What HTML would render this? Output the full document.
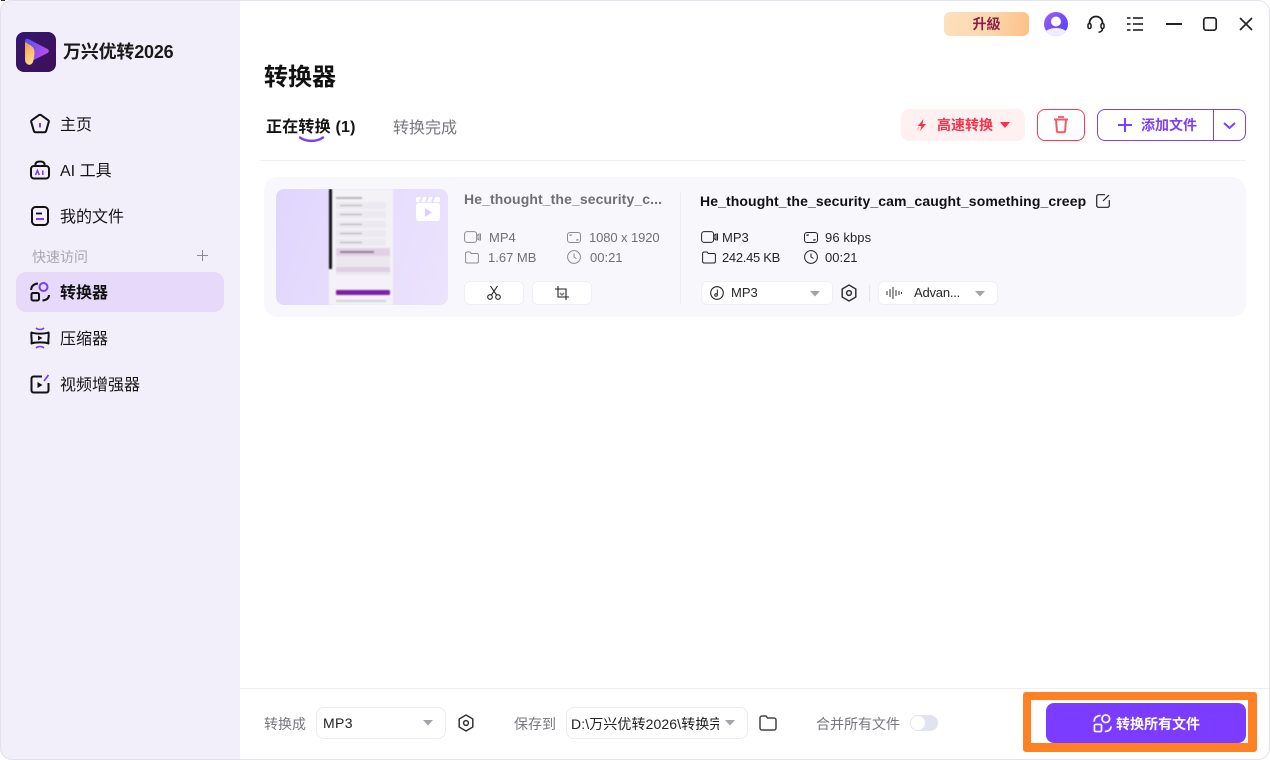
<!DOCTYPE html>
<html lang="zh-CN"><head><meta charset="utf-8"><title>万兴优转2026</title>
<style>
*{box-sizing:border-box}
html,body{margin:0;padding:0;width:1270px;height:760px;overflow:hidden;background:#fff}
body{position:relative;font-family:"Liberation Sans","Noto Sans CJK SC",sans-serif;color:#111}
.a{position:absolute;white-space:nowrap}
svg{position:absolute;overflow:visible;fill:none}
.win{position:absolute;left:0;top:0;width:1270px;height:760px;border:1px solid #e4e3ee;border-radius:12px;overflow:hidden;background:#fff}
.side{position:absolute;left:0;top:0;width:240px;height:760px;background:#f2effb}
.nav{font-size:16px;line-height:24px;color:#151515}
.meta{font-size:13px;line-height:18px;color:#6f6f76}
.meta2{font-size:13px;line-height:18px;color:#26262b}
.wbtn{position:absolute;background:#fff;border-radius:6px;border:1px solid #efeff5}
</style></head><body>
<div class="win"></div>
<div class="side" style="border-radius:12px 0 0 12px;border:1px solid #e2e0ee;border-right:0"></div>
<div class="a" style="left:1px;top:0;width:4px;height:1px;background:#333"></div>

<!-- logo -->
<svg style="left:16px;top:32px" width="40" height="40" viewBox="0 0 40 40">
<defs>
<linearGradient id="lg" x1="0" y1="0" x2="1" y2="1"><stop offset="0" stop-color="#35176f"/><stop offset="1" stop-color="#3d0f58"/></linearGradient>
<linearGradient id="lp" x1="0" y1="0" x2="1" y2=".6"><stop offset="0" stop-color="#4d52f7"/><stop offset="1" stop-color="#c04be8"/></linearGradient>
<linearGradient id="lo" x1="0" y1="0" x2=".5" y2="1"><stop offset="0" stop-color="#f09a4a"/><stop offset="1" stop-color="#ffd98a"/></linearGradient>
</defs>
<rect width="40" height="40" rx="8" fill="url(#lg)"/>
<path d="M9 9c0-2 1.700-2.800 3.400-2L31.500 17c1.800 1 1.800 3 0 4L16 29 9 14z" fill="url(#lp)"/>
<path d="M9 10l5 3c3 1.800 4.500 4 4.500 8l-1 7c-.5 4-3.500 5.500-5.500 4.500-2-1-3-2.500-3-5.500z" fill="url(#lo)"/>
</svg>
<div class="a" style="left:63px;top:39px;font-size:18px;line-height:26px;font-weight:700;letter-spacing:-.2px;color:#1a1a1a">万兴优转2026</div>

<!-- nav -->
<svg style="left:30px;top:114px" width="20" height="20" viewBox="0 0 20 20"><path d="M8.800 1.200a2 2 0 0 1 2.400 0l6.800 4.800a2 2 0 0 1 .7 2.200l-2.500 8.600a2 2 0 0 1-1.900 1.400H5.700a2 2 0 0 1-1.900-1.400L1.300 8.200A2 2 0 0 1 2 6z" stroke="#111" stroke-width="2"/><path d="M10 9v4.500" stroke="#7a3ff5" stroke-width="2"/></svg>
<div class="a nav" style="left:60px;top:114px">主页</div>

<svg style="left:30px;top:160px" width="20" height="20" viewBox="0 0 20 20"><rect x="1" y="6" width="18" height="12.500" rx="3" stroke="#111" stroke-width="2"/><path d="M5.500 6V4.500C5.500 2.500 7 1.500 10 1.500s4.500 1 4.500 3V6" stroke="#111" stroke-width="2"/><path d="M5.500 15l1.900-4.500L9.300 15M12.800 10.500V15" stroke="#7a3ff5" stroke-width="1.600"/></svg>
<div class="a nav" style="left:60px;top:160px">AI 工具</div>

<svg style="left:30px;top:206px" width="20" height="20" viewBox="0 0 20 20"><rect x="2" y="1" width="16" height="18" rx="3.500" stroke="#111" stroke-width="2"/><path d="M6 7.500h6" stroke="#111" stroke-width="1.800"/><path d="M6 13h8" stroke="#7a3ff5" stroke-width="2"/></svg>
<div class="a nav" style="left:60px;top:206px">我的文件</div>

<div class="a" style="left:32px;top:247px;font-size:14px;line-height:20px;color:#a8a6af">快速访问</div>
<svg style="left:197px;top:250px" width="11" height="11"><path d="M5.500 0v11M0 5.500h11" stroke="#8c8a94" stroke-width="1"/></svg>

<div class="a" style="left:16px;top:272px;width:208px;height:40px;background:#e6d9fa;border-radius:10px"></div>
<svg style="left:30px;top:282px" width="20" height="20" viewBox="0 0 20 20"><circle cx="13.500" cy="5" r="4" stroke="#7a3ff5" stroke-width="2"/><rect x="1.500" y="11" width="7.500" height="7.500" rx="1.500" stroke="#111" stroke-width="2"/><path d="M1.200 8C1.200 4 3.500 2 8 1.500M19 13c0 3-2 5-6.500 5.500" stroke="#111" stroke-width="2"/></svg>
<div class="a nav" style="left:60px;top:282px;font-weight:700;color:#111">转换器</div>

<svg style="left:30px;top:327px" width="20" height="22" viewBox="0 0 20 22"><path d="M1.500 5.500C5 7 15 7 18.500 5.500c.7 3.500-.7 7.500 0 11C15 15 5 15 1.500 16.500c.7-3.500-.7-7.500 0-11z" stroke="#111" stroke-width="2" stroke-linejoin="round"/><path d="M8 8.500l4.500 2.500L8 13.500z" fill="#111"/><path d="M6 1c2 2 6 2 8 0M6 21c2-2 6-2 8 0" stroke="#7a3ff5" stroke-width="1.600"/></svg>
<div class="a nav" style="left:60px;top:328px">压缩器</div>

<svg style="left:30px;top:374px" width="20" height="20" viewBox="0 0 20 20"><path d="M12 2.500H3.500a2 2 0 0 0-2 2v12a2 2 0 0 0 2 2h13a2 2 0 0 0 2-2V9" stroke="#111" stroke-width="2"/><path d="M7.500 8l5 3-5 3z" fill="#111"/><path d="M14 7l4.500-6" stroke="#7a3ff5" stroke-width="1.800"/></svg>
<div class="a nav" style="left:60px;top:374px">视频增强器</div>

<!-- top bar -->
<div class="a" style="left:944px;top:12px;width:85px;height:24px;border-radius:6px;background:linear-gradient(100deg,#fde0bd 0%,#fcd7ae 55%,#fdbf85 100%);text-align:center;font-size:14px;line-height:24px;font-weight:700;color:#8c1f47">升級</div>
<svg style="left:1044px;top:12px" width="24" height="24" viewBox="0 0 24 24"><defs><linearGradient id="av" x1="0" y1="0" x2="1" y2="1"><stop offset="0" stop-color="#a35cf5"/><stop offset="1" stop-color="#4a3ffb"/></linearGradient><clipPath id="avc"><circle cx="12" cy="12" r="12"/></clipPath></defs><circle cx="12" cy="12" r="12" fill="url(#av)"/><g clip-path="url(#avc)"><circle cx="12" cy="9.500" r="5" fill="#fff"/><ellipse cx="12" cy="24" rx="13" ry="8" fill="#f1efff"/></g></svg>
<svg style="left:1087px;top:15px" width="18" height="19" viewBox="0 0 18 19"><path d="M2.500 9V8a6.500 6.500 0 0 1 13 0v1" stroke="#1a1a1a" stroke-width="1.800"/><rect x="1" y="8.500" width="3" height="5" rx="1.500" stroke="#1a1a1a" stroke-width="1.500"/><rect x="14" y="8.500" width="3" height="5" rx="1.500" stroke="#1a1a1a" stroke-width="1.500"/><path d="M15.500 13.500c0 2.500-1.500 3.500-4 3.800" stroke="#1a1a1a" stroke-width="1.500"/></svg>
<svg style="left:1127px;top:16px" width="16" height="16"><path d="M6 2H16M6 8H16M6 14H16" stroke="#333" stroke-width="1.700"/><path d="M0 2h3.500M0 8h3.500M0 14h3.500" stroke="#333" stroke-width="1.700"/></svg>
<svg style="left:1166px;top:23px" width="16" height="2"><path d="M0 1h16" stroke="#222" stroke-width="2"/></svg>
<svg style="left:1203px;top:17px" width="14" height="14"><rect x=".8" y=".8" width="12.400" height="12.400" rx="2.500" stroke="#222" stroke-width="1.700"/></svg>
<svg style="left:1239px;top:17px" width="14" height="14"><path d="M1 1l12 12M13 1L1 13" stroke="#222" stroke-width="1.600"/></svg>

<!-- heading -->
<div class="a" style="left:264px;top:61px;font-size:24px;line-height:34px;font-weight:700;color:#111">转换器</div>
<div class="a" style="left:266px;top:116px;font-size:16px;line-height:24px;font-weight:700;letter-spacing:.2px;color:#151515">正在转换 (1)</div>
<svg style="left:299px;top:136px" width="25" height="8"><path d="M1 1.500C7 6 18 6 24 1.500" stroke="#7a3ff5" stroke-width="2.400" stroke-linecap="round"/></svg>
<div class="a" style="left:393px;top:117px;font-size:16px;line-height:24px;color:#77777e">转换完成</div>
<div class="a" style="left:260px;top:160px;width:986px;height:1px;background:#f0f0f3"></div>

<!-- speed -->
<div class="a" style="left:901px;top:109px;width:124px;height:32px;border-radius:8px;background:#fff0f1"></div>
<svg style="left:915px;top:118px" width="14" height="14" viewBox="0 0 14 14"><path d="M2 12l2-3M3 8l1.500-2" stroke="#fbb36b" stroke-width="1"/><path d="M8.500 1L3 8h3.500L5 13l6-7H7.500z" fill="#fb2f47"/></svg>
<div class="a" style="left:937px;top:115px;font-size:14px;line-height:20px;font-weight:700;color:#fb2f47">高速转换</div>
<svg style="left:1000px;top:122px" width="10" height="6"><path d="M0 0h10L5 6z" fill="#fb2f47"/></svg>

<!-- delete -->
<div class="a" style="left:1037px;top:109px;width:48px;height:32px;border:1px solid #fb3a4f;border-radius:8px;background:#fff"></div>
<svg style="left:1053px;top:116px" width="16" height="18" viewBox="0 0 16 18"><path d="M1 3.500h14" stroke="#fb5666" stroke-width="2"/><path d="M5 1h6" stroke="#fb5666" stroke-width="1.800"/><path d="M3 3.500l.9 11.500a1.500 1.500 0 0 0 1.500 1.300h5.200a1.500 1.500 0 0 0 1.500-1.300L13 3.500" stroke="#fb5666" stroke-width="2"/></svg>

<!-- add -->
<div class="a" style="left:1097px;top:109px;width:149px;height:32px;border:1px solid #7c41f6;border-radius:8px;background:#fff"></div>
<div class="a" style="left:1213px;top:109px;width:1px;height:32px;background:#7c41f6"></div>
<svg style="left:1118px;top:118px" width="14" height="14"><path d="M7 0v14M0 7h14" stroke="#7c41f6" stroke-width="2"/></svg>
<div class="a" style="left:1141px;top:115px;font-size:14px;line-height:20px;font-weight:700;color:#7c41f6">添加文件</div>
<svg style="left:1223px;top:122px" width="13" height="8"><path d="M1 1l5.500 5L12 1" stroke="#7c41f6" stroke-width="2"/></svg>

<!-- card -->
<div class="a" style="left:264px;top:177px;width:982px;height:140px;border-radius:14px;background:#f7f7fc"></div>

<!-- thumbnail -->
<div class="a" style="left:276px;top:189px;width:172px;height:116px;border-radius:8px;overflow:hidden;background:linear-gradient(110deg,#e0d6fd 0%,#ece3fd 100%)">
  <div style="position:absolute;left:0;top:0;width:172px;height:116px;filter:blur(.7px)">
  <div class="a" style="left:53px;top:0;width:64px;height:116px;background:#f4f2f6"></div>
  <div class="a" style="left:53px;top:0;width:3px;height:80px;background:#111"></div>
  <div class="a" style="left:60px;top:8px;width:26px;height:2px;background:#b5b3bb"></div>
  <div class="a" style="left:60px;top:13px;width:50px;height:7px;background:#eceaf0"></div>
  <div class="a" style="left:64px;top:16px;width:22px;height:1px;background:#aeacb4"></div>
  <div class="a" style="left:60px;top:22px;width:50px;height:7px;background:#eceaf0"></div>
  <div class="a" style="left:64px;top:25px;width:22px;height:1px;background:#aeacb4"></div>
  <div class="a" style="left:60px;top:32px;width:50px;height:7px;background:#eceaf0"></div>
  <div class="a" style="left:64px;top:35px;width:22px;height:1px;background:#aeacb4"></div>
  <div class="a" style="left:60px;top:41px;width:50px;height:7px;background:#eceaf0"></div>
  <div class="a" style="left:64px;top:44px;width:22px;height:1px;background:#aeacb4"></div>
  <div class="a" style="left:60px;top:50px;width:50px;height:7px;background:#eceaf0"></div>
  <div class="a" style="left:64px;top:53px;width:22px;height:1px;background:#aeacb4"></div>
  <div class="a" style="left:60px;top:59px;width:54px;height:8px;background:#e2d0e6"></div>
  <div class="a" style="left:64px;top:62px;width:34px;height:2px;background:#8d7d95"></div>
  <div class="a" style="left:60px;top:67px;width:54px;height:19px;background:#ece7ef"></div>
  <div class="a" style="left:60px;top:78px;width:54px;height:5px;background:#dbd0e2"></div>
  <div class="a" style="left:60px;top:101px;width:54px;height:5px;background:#7a1fa8;border-radius:1px"></div>
  <div class="a" style="left:60px;top:111px;width:50px;height:2px;background:#d3d1d9"></div>
  </div>
</div>
<svg style="left:416px;top:197px" width="24" height="24" viewBox="0 0 24 24"><rect x="0" y="6" width="24" height="18" rx="3" fill="#fff"/><path d="M2 0h20a2 2 0 0 1 2 2v3H0V2a2 2 0 0 1 2-2z" fill="#fff"/><path d="M6 0L4 5M12 0l-2 5M18 0l-2 5" stroke="#e4dafc" stroke-width="2"/><path d="M9 11l7 4.500L9 20z" fill="#dccdfb"/></svg>

<!-- source info -->
<div class="a" style="left:464px;top:189px;font-size:14px;line-height:20px;font-weight:700;letter-spacing:.1px;color:#6f6f76">He_thought_the_security_c...</div>
<svg style="left:464px;top:231px" width="18" height="12" viewBox="0 0 18 12"><rect x=".6" y=".6" width="12" height="10.800" rx="2.500" stroke="#8a8a90" stroke-width="1"/><path d="M15 3l-2 1.500v3L15 9zM16.500 2.500v7" stroke="#8a8a90" stroke-width="1"/></svg>
<div class="a meta" style="left:489px;top:229px">MP4</div>
<svg style="left:465px;top:251px" width="14" height="13" viewBox="0 0 14 13"><path d="M.6 2.500a1.500 1.500 0 0 1 1.500-1.500h3l1.200 1.500h5.600a1.500 1.500 0 0 1 1.500 1.500v6.500a1.500 1.500 0 0 1-1.500 1.500h-9.800a1.500 1.500 0 0 1-1.500-1.500z" stroke="#8a8a90" stroke-width="1"/></svg>
<div class="a meta" style="left:488px;top:249px">1.67 MB</div>
<svg style="left:567px;top:232px" width="14" height="11" viewBox="0 0 14 11"><rect x=".5" y=".5" width="13" height="10" rx="2.500" stroke="#8a8a90" stroke-width="1"/><path d="M3 4V3h2M11 7v1H9" stroke="#8a8a90" stroke-width="1"/></svg>
<div class="a meta" style="left:589px;top:229px;letter-spacing:-.1px">1080 x 1920</div>
<svg style="left:567px;top:250px" width="14" height="14" viewBox="0 0 14 14"><circle cx="7" cy="7" r="6.400" stroke="#8a8a90" stroke-width="1"/><path d="M7 3.500V7l2.500 1.500" stroke="#8a8a90" stroke-width="1"/></svg>
<div class="a meta" style="left:590px;top:249px">00:21</div>

<div class="wbtn" style="left:464px;top:281px;width:60px;height:24px"></div>
<svg style="left:487px;top:286px" width="14" height="14" viewBox="0 0 14 14"><circle cx="3" cy="11" r="2.300" stroke="#222" stroke-width="1.100"/><circle cx="11" cy="11" r="2.300" stroke="#222" stroke-width="1.100"/><path d="M4.300 9.200L10.500 0M9.700 9.200L3.500 0" stroke="#222" stroke-width="1.100"/></svg>
<div class="wbtn" style="left:532px;top:281px;width:60px;height:24px"></div>
<svg style="left:555px;top:286px" width="14" height="14" viewBox="0 0 14 14"><path d="M3 0v11h11M0 3h11v11" stroke="#222" stroke-width="1.100"/><path d="M5 7l2 2 2-2" stroke="#777" stroke-width="1.500"/></svg>

<div class="a" style="left:680px;top:192px;width:1px;height:112px;background:#ecedf3"></div>

<!-- target info -->
<div class="a" style="left:700px;top:191px;font-size:14px;line-height:20px;font-weight:700;letter-spacing:.1px;color:#111">He_thought_the_security_cam_caught_something_creep</div>
<svg style="left:1096px;top:194px" width="14" height="14" viewBox="0 0 14 14"><path d="M9 .7H2.500A1.800 1.800 0 0 0 .7 2.500v9a1.800 1.800 0 0 0 1.800 1.800h9a1.800 1.800 0 0 0 1.800-1.800V6M7 7l6-6" stroke="#222" stroke-width="1.200"/></svg>
<svg style="left:701px;top:231px" width="18" height="12" viewBox="0 0 18 12"><rect x=".6" y=".6" width="12" height="10.800" rx="2.500" stroke="#222" stroke-width="1"/><path d="M15 3l-2 1.500v3L15 9zM16.500 2.500v7" stroke="#222" stroke-width="1"/></svg>
<div class="a meta2" style="left:722px;top:229px">MP3</div>
<svg style="left:702px;top:251px" width="14" height="13" viewBox="0 0 14 13"><path d="M.6 2.500a1.500 1.500 0 0 1 1.500-1.500h3l1.200 1.500h5.600a1.500 1.500 0 0 1 1.500 1.500v6.500a1.500 1.500 0 0 1-1.500 1.500h-9.800a1.500 1.500 0 0 1-1.500-1.500z" stroke="#222" stroke-width="1"/></svg>
<div class="a meta2" style="left:722px;top:249px;letter-spacing:-.3px">242.45 KB</div>
<svg style="left:804px;top:232px" width="14" height="11" viewBox="0 0 14 11"><rect x=".5" y=".5" width="13" height="10" rx="2.500" stroke="#222" stroke-width="1"/><path d="M3 4V3h2M11 7v1H9" stroke="#222" stroke-width="1"/></svg>
<div class="a meta2" style="left:825px;top:229px;letter-spacing:.1px">96 kbps</div>
<svg style="left:804px;top:250px" width="14" height="14" viewBox="0 0 14 14"><circle cx="7" cy="7" r="6.400" stroke="#222" stroke-width="1"/><path d="M7 3.500V7l2.500 1.500" stroke="#222" stroke-width="1"/></svg>
<div class="a meta2" style="left:825px;top:249px">00:21</div>

<div class="wbtn" style="left:701px;top:281px;width:132px;height:24px"></div>
<svg style="left:710px;top:286px" width="14" height="14" viewBox="0 0 14 14"><circle cx="7" cy="7" r="6.300" stroke="#222" stroke-width="1.100"/><circle cx="6" cy="9" r="1.300" stroke="#222" stroke-width="1"/><path d="M7.300 9V3.500" stroke="#222" stroke-width="1"/></svg>
<div class="a meta2" style="left:731px;top:284px">MP3</div>
<svg style="left:810px;top:291px" width="10" height="6"><path d="M0 0h10L5 5.500z" fill="#a3a3a9"/></svg>
<svg style="left:841px;top:284px" width="16" height="18" viewBox="0 0 16 18"><path d="M8 1l6.800 4v8L8 17l-6.800-4V5z" stroke="#333" stroke-width="1.500" stroke-linejoin="round"/><circle cx="8" cy="9" r="2.400" stroke="#333" stroke-width="1.500"/></svg>
<div class="a" style="left:869px;top:285px;width:1px;height:17px;background:#e5e5ea"></div>
<div class="wbtn" style="left:878px;top:281px;width:120px;height:24px"></div>
<svg style="left:886px;top:287px" width="16" height="12"><path d="M1 4v4M4 2v8M7 0v12M10 3v6M13 4v4M15.500 5v2" stroke="#333" stroke-width="1"/></svg>
<div class="a meta2" style="left:914px;top:284px;letter-spacing:-.2px">Advan...</div>
<svg style="left:975px;top:291px" width="10" height="6"><path d="M0 0h10L5 5.500z" fill="#a3a3a9"/></svg>

<!-- footer -->
<div class="a" style="left:240px;top:688px;width:1029px;height:1px;background:#efeff3"></div>
<div class="a" style="left:264px;top:714px;font-size:14px;line-height:20px;color:#77777e">转换成</div>
<div class="a" style="left:316px;top:707px;width:130px;height:32px;border:1px solid #ebebf2;border-radius:8px;background:#fff"></div>
<div class="a" style="left:323px;top:713px;font-size:14px;line-height:20px;letter-spacing:.4px;color:#222">MP3</div>
<svg style="left:423px;top:720px" width="10" height="6"><path d="M0 0h10L5 5.500z" fill="#a3a3a9"/></svg>
<svg style="left:458px;top:714px" width="16" height="18" viewBox="0 0 16 18"><path d="M8 1l6.800 4v8L8 17l-6.800-4V5z" stroke="#333" stroke-width="1.500" stroke-linejoin="round"/><circle cx="8" cy="9" r="2.400" stroke="#333" stroke-width="1.500"/></svg>
<div class="a" style="left:514px;top:714px;font-size:14px;line-height:20px;color:#77777e">保存到</div>
<div class="a" style="left:566px;top:707px;width:182px;height:32px;border:1px solid #ebebf2;border-radius:8px;background:#fff"></div>
<div class="a" style="left:571px;top:714px;width:148px;overflow:hidden;font-size:14px;line-height:20px;letter-spacing:.1px;color:#222">D:\万兴优转2026\转换完成</div>
<svg style="left:725px;top:720px" width="10" height="6"><path d="M0 0h10L5 5.500z" fill="#a3a3a9"/></svg>
<svg style="left:759px;top:715px" width="18" height="16" viewBox="0 0 18 16"><path d="M1 3a2 2 0 0 1 2-2h4l1.500 2H15a2 2 0 0 1 2 2v8a2 2 0 0 1-2 2H3a2 2 0 0 1-2-2z" stroke="#444" stroke-width="1.500"/></svg>
<div class="a" style="left:816px;top:714px;font-size:14px;line-height:20px;color:#77777e">合并所有文件</div>
<div class="a" style="left:910px;top:715px;width:28px;height:16px;border-radius:8px;background:#e1e4ef"></div>
<div class="a" style="left:911px;top:716px;width:14px;height:14px;border-radius:50%;background:#fff"></div>

<div class="a" style="left:1023px;top:692px;width:234px;height:60px;border:solid #ff8124;border-width:8px 9px 9px 8px;border-radius:3px"></div>
<div class="a" style="left:1046px;top:703px;width:200px;height:40px;border-radius:8px;background:#7c3cff"></div>
<svg style="left:1093px;top:714px" width="19" height="19" viewBox="0 0 20 20"><circle cx="13.500" cy="5" r="4" stroke="#fff" stroke-width="1.800"/><rect x="1.500" y="11" width="7.500" height="7.500" rx="1.500" stroke="#fff" stroke-width="1.800"/><path d="M1.200 8C1.200 4 3.500 2 8 1.500M19 13c0 3-2 5-6.500 5.500" stroke="#fff" stroke-width="1.800"/></svg>
<div class="a" style="left:1116px;top:714px;font-size:14px;line-height:20px;font-weight:700;color:#fff">转换所有文件</div>
</body></html>
